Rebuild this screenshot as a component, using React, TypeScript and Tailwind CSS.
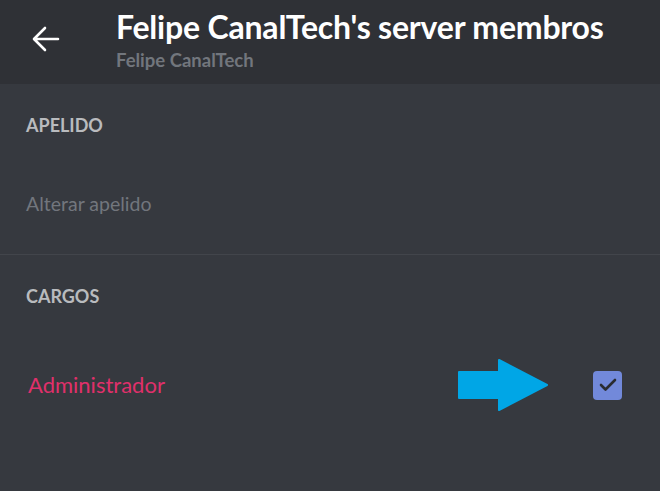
import React from "react";

export default function App() {
  return (
    <div className="w-[660px] h-[491px] bg-[#36393f] flex flex-col overflow-hidden" style={{ fontFamily: "Lato, 'Noto Sans', sans-serif" }}>
      <div className="h-[84px] bg-[#2f3136] flex items-start">
        <div className="w-[116px] pt-[26px] pl-[32px]">
          <svg width="28" height="26" viewBox="0 0 28 26" fill="none" stroke="white" strokeWidth="2.6" strokeLinecap="round" strokeLinejoin="round">
            <path d="M26 13H3M13 2L2 13l11 11" />
          </svg>
        </div>
        <div className="flex flex-col pt-[6px]">
          <div className="text-white font-bold text-[32px] leading-[42px] tracking-[-0.2px]">Felipe CanalTech's server membros</div>
          <div className="text-[#72767d] font-bold text-[18.5px] leading-[22px] mt-[1px]">Felipe CanalTech</div>
        </div>
      </div>
      <div className="px-[26px] pt-[30px] h-[171px] border-b border-[#42454b]">
        <div className="text-[#b9bbbe] font-bold text-[18px] leading-[22px]">APELIDO</div>
        <div className="text-[#72767d] text-[19.5px] leading-[24px] mt-[56px]">Alterar apelido</div>
      </div>
      <div className="px-[26px] pt-[30px]">
        <div className="text-[#b9bbbe] font-bold text-[18px] leading-[22px]">CARGOS</div>
        <div className="flex items-center mt-[58px] h-[40px]">
          <div className="text-[#e0306b] text-[22px] leading-[26px] flex-1 pl-[2px]">Administrador</div>
          <svg width="92" height="54" viewBox="0 0 92 54" className="mr-[44px]">
            <path d="M2 14h40V2l48 25-48 25V40H2z" fill="#00a6e6" stroke="#00a6e6" strokeWidth="2" strokeLinejoin="round" />
          </svg>
          <div className="w-[29px] h-[29px] rounded-[4px] bg-[#7289da] flex items-center justify-center mr-[12px]">
            <svg width="18" height="14" viewBox="0 0 18 14" fill="none" stroke="#2a2c31" strokeWidth="2.6" strokeLinecap="round" strokeLinejoin="round">
              <path d="M2 7l4.5 4.5L16 2" />
            </svg>
          </div>
        </div>
      </div>
    </div>
  );
}
